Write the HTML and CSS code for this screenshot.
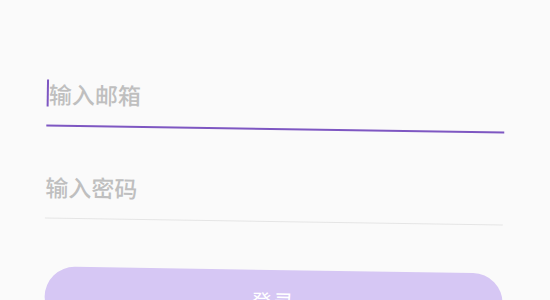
FILE: index.html
```html
<!DOCTYPE html>
<html lang="zh-CN">
<head>
    <meta charset="UTF-8">
    <meta name="viewport" content="width=device-width, initial-scale=1.0">
    <title>登录</title>
    <link rel="stylesheet" href="styles.css">
</head>
<body>
    <!-- Login form -->
    <div class="login-form">
        <div class="field field-active">
            <span class="caret"></span><span class="placeholder">输入邮箱</span>
        </div>
        <div class="field">
            <span class="placeholder">输入密码</span>
        </div>
        <button class="login-button">登录</button>
    </div>
</body>
</html>
```

FILE: styles.css
```css
body {
    font-family: "Noto Sans CJK SC", "Noto Sans", sans-serif;
    background: #fafafa;
    margin: 0;
    padding: 84px 0 0 47px;
    overflow: hidden;
}

.login-form {
    width: 458px;
    transform: rotate(0.9deg);
    transform-origin: 50% 0;
}

.field {
    display: flex;
    align-items: flex-start;
    height: 30px;
    padding-bottom: 14px;
    border-bottom: 1px solid #e5e5e5;
    margin-bottom: 48px;
}

.field-active {
    border-bottom: 2px solid #7e57c2;
    margin-bottom: 47px;
}

.placeholder {
    font-size: 23px;
    line-height: 26px;
    font-weight: 500;
    color: #bfbfbf;
}

.caret {
    width: 2px;
    height: 27px;
    margin-top: -1px;
    background: #7e57c2;
}

.login-button {
    display: block;
    width: 458px;
    height: 60px;
    margin-left: 1px;
    border: none;
    border-radius: 30px;
    background: #d6c7f4;
    color: white;
    font-family: inherit;
    font-size: 20px;
    letter-spacing: 2px;
}
```
